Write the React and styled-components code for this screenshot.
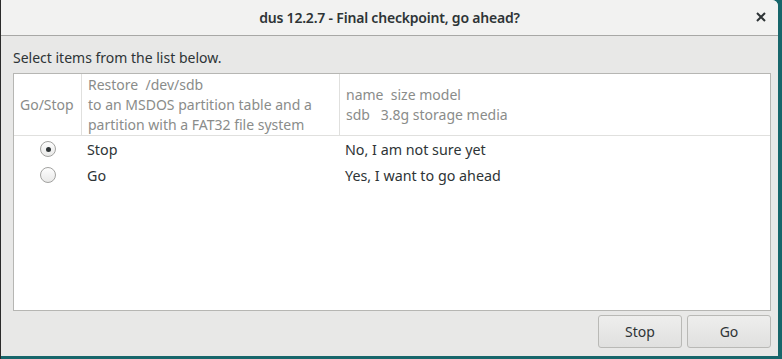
import React from "react";
import styled, { createGlobalStyle } from "styled-components";

const GlobalStyle = createGlobalStyle`
  html, body {
    margin: 0;
    padding: 0;
    background: #17666b;
    width: 782px;
    height: 359px;
    overflow: hidden;
  }
`;

const Desktop = styled.div`
  width: 782px;
  height: 359px;
  display: flex;
  background: linear-gradient(to right, #2b2b2b 0 1px, #17666b 1px);
`;

const Window = styled.div`
  margin-left: 1px;
  width: 777px;
  height: 356px;
  display: flex;
  flex-direction: column;
  background: #e8e8e7;
  border-top-right-radius: 6px;
  font-family: "Noto Sans", "Open Sans", sans-serif;
  color: #2e3436;
  overflow: hidden;
`;

const TitleBar = styled.div`
  height: 35px;
  flex: none;
  display: flex;
  align-items: center;
  justify-content: center;
  position: relative;
  background: #f2f2f1;
  border-bottom: 1px solid #a8a8a6;
`;

const Title = styled.div`
  font-size: 14px;
  font-weight: 600;
  letter-spacing: -0.2px;
  color: #2e3436;
`;

const Close = styled.button`
  position: absolute;
  right: 10px;
  top: 10px;
  width: 14px;
  height: 14px;
  padding: 0;
  border: 0;
  background: none;
  display: flex;
  align-items: center;
  justify-content: center;
`;

const Body = styled.div`
  flex: 1;
  display: flex;
  flex-direction: column;
  padding: 12px 7px 8px 12px;
`;

const Prompt = styled.div`
  font-size: 14px;
  line-height: 20px;
  margin-bottom: 5px;
`;

const List = styled.div`
  height: 236px;
  background: #fff;
  border: 1px solid #b6b6b3;
  display: flex;
  flex-direction: column;
`;

const Grid = styled.div`
  display: grid;
  grid-template-columns: 68px 258px 1fr;
`;

const HeadCell = styled.div`
  height: 61px;
  border-bottom: 1px solid #e0e0de;
  border-right: ${(p) => (p.last ? "none" : "1px solid #e0e0de")};
  display: flex;
  flex-direction: column;
  justify-content: center;
  padding: 0 6px;
  font-size: 14px;
  line-height: 20px;
  color: #8a8c8a;
  white-space: pre;
`;

const Cell = styled.div`
  height: 26px;
  display: flex;
  align-items: center;
  justify-content: ${(p) => (p.center ? "center" : "flex-start")};
  padding-left: ${(p) => p.pad || 0}px;
  font-size: 14.3px;
  color: #2e3436;
`;

const Radio = styled.span`
  width: 16px;
  height: 16px;
  box-sizing: border-box;
  border-radius: 50%;
  border: 1px solid #a2a2a0;
  background: linear-gradient(#fdfdfd, #e9e9e8);
  display: flex;
  align-items: center;
  justify-content: center;
  &::after {
    content: "";
    width: 5px;
    height: 5px;
    border-radius: 50%;
    background: ${(p) => (p.checked ? "#2e3436" : "transparent")};
  }
`;

const Footer = styled.div`
  margin-top: auto;
  display: flex;
  justify-content: flex-end;
  gap: 5px;
`;

const Button = styled.button`
  width: 84px;
  height: 33px;
  box-sizing: border-box;
  border: 1px solid #b9b9b6;
  border-radius: 3px;
  background: linear-gradient(#eeeeed, #e0e0df);
  font-family: "Noto Sans", "Open Sans", sans-serif;
  font-size: 14px;
  color: #2e3436;
`;

const rows = [
  { label: "Stop", text: "No, I am not sure yet", checked: true },
  { label: "Go", text: "Yes, I want to go ahead", checked: false },
];

export default function App() {
  return (
    <Desktop>
      <GlobalStyle />
      <Window>
        <TitleBar>
          <Title>dus 12.2.7 - Final checkpoint, go ahead?</Title>
          <Close aria-label="close">
            <svg width="10" height="10" viewBox="0 0 10 10">
              <path d="M1 1 L9 9 M9 1 L1 9" stroke="#2e3436" strokeWidth="2" />
            </svg>
          </Close>
        </TitleBar>
        <Body>
          <Prompt>Select items from the list below.</Prompt>
          <List>
            <Grid>
              <HeadCell>Go/Stop</HeadCell>
              <HeadCell>
                {"Restore  /dev/sdb\nto an MSDOS partition table and a\npartition with a FAT32 file system"}
              </HeadCell>
              <HeadCell last>{"name  size model\nsdb   3.8g storage media"}</HeadCell>
              {rows.map((r) => (
                <React.Fragment key={r.label}>
                  <Cell center>
                    <Radio checked={r.checked} />
                  </Cell>
                  <Cell pad={5}>{r.label}</Cell>
                  <Cell pad={5}>{r.text}</Cell>
                </React.Fragment>
              ))}
            </Grid>
          </List>
          <Footer>
            <Button>Stop</Button>
            <Button>Go</Button>
          </Footer>
        </Body>
      </Window>
    </Desktop>
  );
}
